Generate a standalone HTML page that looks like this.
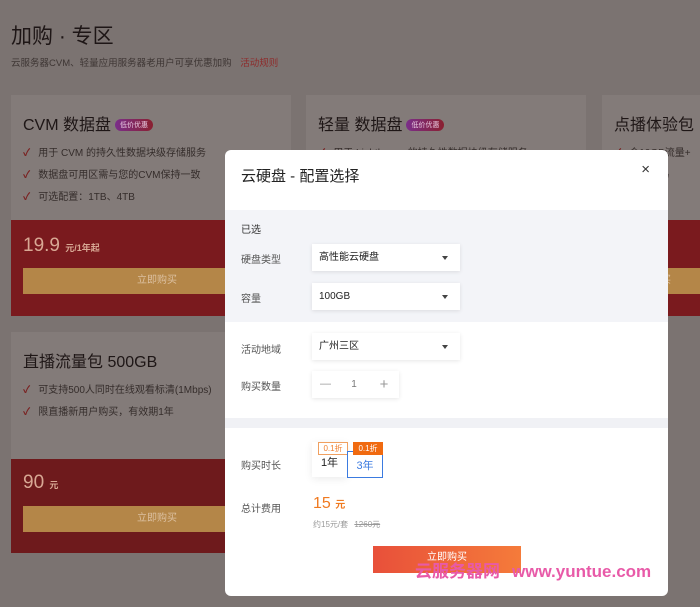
<!DOCTYPE html>
<html><head><meta charset="utf-8"><style>
*{margin:0;padding:0;box-sizing:border-box}
body{width:700px;height:607px;overflow:hidden;background:#7b7371;font-family:"Liberation Sans","Noto Sans CJK SC",sans-serif;position:relative}
.page{position:absolute;inset:0;background:#7b7371;overflow:hidden}
.a{position:absolute}
.card{position:absolute;background:#837b79;overflow:hidden}
.card h3{position:absolute;left:12px;top:16px;font-size:16px;font-weight:normal;color:#1e1616}
.tag{display:inline-block;font-size:7px;color:#e8c8e0;background:linear-gradient(90deg,#7a2e8a,#8a2030);border-radius:6px;padding:1px 5px;vertical-align:3px;margin-left:4px}
.li{position:absolute;left:12px;font-size:10px;color:#352d2b;white-space:nowrap}
.li:before{content:"✓";color:#7a2020;margin-right:8px;font-weight:bold}
.red{position:absolute;left:0;right:0;background:#7a1a1e}
.price{position:absolute;left:12px;font-size:19px;color:#d8a894}
.price small{font-size:9px;font-weight:bold}
.gold{position:absolute;left:12px;right:0;height:26px;background:#b48648;color:#dcc0a0;font-size:10px;text-align:center;line-height:26px}
.modal{position:absolute;left:225px;top:150px;width:443px;height:446px;background:#fff;border-radius:6px;overflow:hidden}
.lbl{position:absolute;left:16px;font-size:10px;color:#555}
.sel{position:absolute;left:87px;width:148px;height:27px;background:#fff;box-shadow:0 1px 4px rgba(0,0,0,.1);font-size:10px;color:#222;line-height:27px;padding-left:7px}
.sel:after{content:"";position:absolute;right:12px;top:12px;border:3px solid transparent;border-top:4px solid #444}
</style></head><body>
<div class="page">
<div class="a" style="left:11px;top:20px;font-size:21px;color:#1e1616">加购 · 专区</div>
<div class="a" style="left:11px;top:55px;font-size:9.5px;color:#3e3634">云服务器CVM、轻量应用服务器老用户可享优惠加购 <span style="color:#8e2a2a;margin-left:6px">活动规则</span></div>

<div class="card" style="left:11px;top:95px;width:280px;height:221px">
<h3>CVM 数据盘<span class="tag">低价优惠</span></h3>
<div class="li" style="top:49px">用于 CVM 的持久性数据块级存储服务</div>
<div class="li" style="top:71px">数据盘可用区需与您的CVM保持一致</div>
<div class="li" style="top:93px">可选配置：1TB、4TB</div>
<div class="red" style="top:125px;height:96px"><div class="price" style="top:15px">19.9 <small>元/1年起</small></div><div class="gold" style="top:48px">立即购买</div></div>
</div>
<div class="card" style="left:306px;top:95px;width:280px;height:221px">
<h3>轻量 数据盘<span class="tag">低价优惠</span></h3>
<div class="li" style="top:49px">用于 Lighthouse 的持久性数据块级存储服务</div>
<div class="red" style="top:125px;height:96px"></div>
</div>
<div class="card" style="left:602px;top:95px;width:98px;height:221px">
<h3>点播体验包</h3>
<div class="li" style="top:49px">含10GB流量+</div>
<div class="li" style="top:71px">高清转码</div>
<div class="li" style="top:93px">户全网</div>
<div class="red" style="top:125px;height:96px"><div class="gold" style="top:48px;left:0">立即购买</div></div>
</div>
<div class="card" style="left:11px;top:332px;width:280px;height:221px">
<h3>直播流量包 500GB</h3>
<div class="li" style="top:49px">可支持500人同时在线观看标清(1Mbps)</div>
<div class="li" style="top:71px">限直播新用户购买，有效期1年</div>
<div class="red" style="top:127px;height:94px;background:#6e1a1c"><div class="price" style="top:13px">90 <small>元</small></div><div class="gold" style="top:47px">立即购买</div></div>
</div>
</div>

<div class="modal">
<div class="a" style="left:16px;top:15px;font-size:15px;color:#222">云硬盘 - 配置选择</div>
<div class="a" style="right:18px;top:11px;font-size:15px;color:#333">×</div>
<div class="a" style="left:0;right:0;top:60px;height:112px;background:#f3f4f8"></div>
<div class="lbl" style="top:71px;color:#333">已选</div>
<div class="lbl" style="top:101px">硬盘类型</div><div class="sel" style="top:94px">高性能云硬盘</div>
<div class="lbl" style="top:140px">容量</div><div class="sel" style="top:133px">100GB</div>
<div class="lbl" style="top:191px">活动地域</div><div class="sel" style="top:183px">广州三区</div>
<div class="lbl" style="top:228px">购买数量</div>
<div class="a" style="left:87px;top:221px;width:87px;height:27px;box-shadow:0 1px 4px rgba(0,0,0,.1);font-size:11px;color:#999;display:flex;line-height:27px;text-align:center"><span style="width:27px">—</span><span style="width:30px;color:#777;font-size:10px">1</span><span style="width:30px;font-size:15px">+</span></div>
<div class="a" style="left:0;right:0;top:268px;height:10px;background:#f0f1f5"></div>
<div class="lbl" style="top:307px">购买时长</div>
<div class="a" style="left:87px;top:292px;width:35px;height:35px;box-shadow:0 2px 8px rgba(0,0,0,.08);font-size:11px;color:#222;text-align:center;line-height:14px;padding-top:14px">1年</div>
<div class="a" style="left:93px;top:292px;width:30px;height:13px;border:1px solid #f0a060;background:#fff;color:#f08030;font-size:8px;text-align:center;line-height:11px">0.1折</div>
<div class="a" style="left:122px;top:301px;width:36px;height:27px;border:1px solid #3b7be0;background:#fff;color:#3b7be0;font-size:11px;text-align:center;line-height:24px;padding-top:2px">3年</div>
<div class="a" style="left:128px;top:292px;width:30px;height:13px;background:#f06a10;color:#fff;font-size:8px;text-align:center;line-height:13px">0.1折</div>
<div class="lbl" style="top:350px">总计费用</div>
<div class="a" style="left:88px;top:345px;font-size:16px;color:#f07a20">15 <span style="font-size:10px;font-weight:bold">元</span></div>
<div class="a" style="left:88px;top:369px;font-size:8px;color:#999">约15元/套 <s style="margin-left:4px">1260元</s></div>
<div class="a" style="left:148px;top:396px;width:148px;height:27px;background:linear-gradient(90deg,#e8503a,#f57b3a);color:#fff;font-size:10px;text-align:center;line-height:24px">立即购买</div>
</div>
<div class="a" style="left:415px;top:561px;font-size:17px;color:#e85aa8;font-weight:bold;white-space:nowrap;line-height:22px">云服务器网<span style="margin-left:12px">www.yuntue.com</span></div>
</body></html>
